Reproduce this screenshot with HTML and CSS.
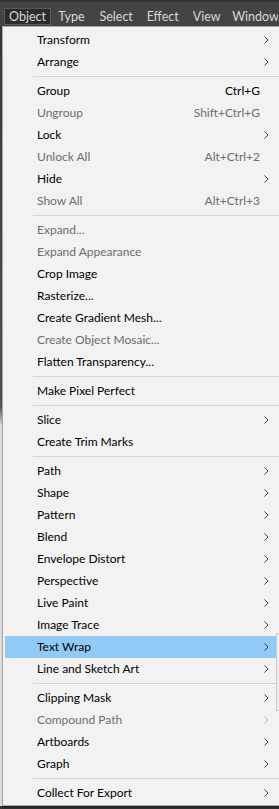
FILE: index.html
```html
<!DOCTYPE html>
<html lang="en">
<head>
  <meta charset="UTF-8" />
  <title>Object menu</title>
  <link rel="stylesheet" href="styles.css">
</head>
<body>
  <div class="menubar">
    <span class="top open">Object</span>
    <span class="top w-type">Type</span>
    <span class="top w-select">Select</span>
    <span class="top w-effect">Effect</span>
    <span class="top w-view">View</span>
    <span class="top">Window</span>
  </div>

  <div class="stage">
    <div class="backdrop"></div>
    <div class="menu">
      <div class="row"><span class="label">Transform</span><span class="arrow"><svg width="5" height="8"><path d="M0.5 0.5 L4 4 L0.5 7.5" /></svg></span></div>
      <div class="row"><span class="label">Arrange</span><span class="arrow"><svg width="5" height="8"><path d="M0.5 0.5 L4 4 L0.5 7.5" /></svg></span></div>
      <div class="sep"></div>
      <div class="row"><span class="label">Group</span><span class="key">Ctrl+G</span><span class="arrow"></span></div>
      <div class="row off"><span class="label">Ungroup</span><span class="key">Shift+Ctrl+G</span><span class="arrow"></span></div>
      <div class="row"><span class="label">Lock</span><span class="arrow"><svg width="5" height="8"><path d="M0.5 0.5 L4 4 L0.5 7.5" /></svg></span></div>
      <div class="row off"><span class="label">Unlock All</span><span class="key">Alt+Ctrl+2</span><span class="arrow"></span></div>
      <div class="row"><span class="label">Hide</span><span class="arrow"><svg width="5" height="8"><path d="M0.5 0.5 L4 4 L0.5 7.5" /></svg></span></div>
      <div class="row off"><span class="label">Show All</span><span class="key">Alt+Ctrl+3</span><span class="arrow"></span></div>
      <div class="sep"></div>
      <div class="row off"><span class="label">Expand...</span></div>
      <div class="row off"><span class="label">Expand Appearance</span></div>
      <div class="row"><span class="label">Crop Image</span></div>
      <div class="row"><span class="label">Rasterize...</span></div>
      <div class="row"><span class="label">Create Gradient Mesh...</span></div>
      <div class="row off"><span class="label">Create Object Mosaic...</span></div>
      <div class="row"><span class="label">Flatten Transparency...</span></div>
      <div class="sep"></div>
      <div class="row"><span class="label">Make Pixel Perfect</span></div>
      <div class="sep"></div>
      <div class="row"><span class="label">Slice</span><span class="arrow"><svg width="5" height="8"><path d="M0.5 0.5 L4 4 L0.5 7.5" /></svg></span></div>
      <div class="row"><span class="label">Create Trim Marks</span></div>
      <div class="sep"></div>
      <div class="row"><span class="label">Path</span><span class="arrow"><svg width="5" height="8"><path d="M0.5 0.5 L4 4 L0.5 7.5" /></svg></span></div>
      <div class="row"><span class="label">Shape</span><span class="arrow"><svg width="5" height="8"><path d="M0.5 0.5 L4 4 L0.5 7.5" /></svg></span></div>
      <div class="row"><span class="label">Pattern</span><span class="arrow"><svg width="5" height="8"><path d="M0.5 0.5 L4 4 L0.5 7.5" /></svg></span></div>
      <div class="row"><span class="label">Blend</span><span class="arrow"><svg width="5" height="8"><path d="M0.5 0.5 L4 4 L0.5 7.5" /></svg></span></div>
      <div class="row"><span class="label">Envelope Distort</span><span class="arrow"><svg width="5" height="8"><path d="M0.5 0.5 L4 4 L0.5 7.5" /></svg></span></div>
      <div class="row"><span class="label">Perspective</span><span class="arrow"><svg width="5" height="8"><path d="M0.5 0.5 L4 4 L0.5 7.5" /></svg></span></div>
      <div class="row"><span class="label">Live Paint</span><span class="arrow"><svg width="5" height="8"><path d="M0.5 0.5 L4 4 L0.5 7.5" /></svg></span></div>
      <div class="row"><span class="label">Image Trace</span><span class="arrow"><svg width="5" height="8"><path d="M0.5 0.5 L4 4 L0.5 7.5" /></svg></span></div>
      <div class="row hot"><span class="label">Text Wrap</span><span class="arrow"><svg width="5" height="8"><path d="M0.5 0.5 L4 4 L0.5 7.5" /></svg></span></div>
      <div class="row"><span class="label">Line and Sketch Art</span><span class="arrow"><svg width="5" height="8"><path d="M0.5 0.5 L4 4 L0.5 7.5" /></svg></span></div>
      <div class="sep"></div>
      <div class="row"><span class="label">Clipping Mask</span><span class="arrow"><svg width="5" height="8"><path d="M0.5 0.5 L4 4 L0.5 7.5" /></svg></span></div>
      <div class="row off"><span class="label">Compound Path</span><span class="arrow"><svg width="5" height="8"><path d="M0.5 0.5 L4 4 L0.5 7.5" /></svg></span></div>
      <div class="row"><span class="label">Artboards</span><span class="arrow"><svg width="5" height="8"><path d="M0.5 0.5 L4 4 L0.5 7.5" /></svg></span></div>
      <div class="row"><span class="label">Graph</span><span class="arrow"><svg width="5" height="8"><path d="M0.5 0.5 L4 4 L0.5 7.5" /></svg></span></div>
      <div class="sep"></div>
      <div class="row"><span class="label">Collect For Export</span><span class="arrow"><svg width="5" height="8"><path d="M0.5 0.5 L4 4 L0.5 7.5" /></svg></span></div>
    </div>
    <!-- edge of the Text Wrap submenu peeking in -->
    <div class="submenu"></div>
  </div>
</body>
</html>
```

FILE: styles.css
```css
html, body { margin: 0; padding: 0; }
body {
  width: 279px; height: 809px; overflow: hidden;
  background: #353535;
  font-family: Lato, "Liberation Sans", sans-serif;
}

.menubar {
  height: 26px; box-sizing: border-box;
  border-top: 2px solid #333;
  background: #444;
  display: flex; align-items: flex-end;
  padding: 0 0 1px 4px;
  white-space: nowrap;
}
.top {
  color: #d8d8d8; font-size: 12.5px; line-height: 15px;
  border: 1px solid transparent;
  overflow: hidden;
}
.top.open {
  width: 48px; box-sizing: border-box;
  background: #2c2c2c; border-color: #5a5a5a;
  padding-left: 4px; margin-right: 6px;
}
.w-type { width: 40px; }
.w-select { width: 46px; }
.w-effect { width: 45px; }
.w-view { width: 38px; }

.stage { position: relative; display: flex; }
.backdrop {
  width: 2px; flex: none;
  background: linear-gradient(#3a3a3a 0, #555 380px, #e9e9e9 400px, #e9e9e9 100%);
}
.menu {
  width: 276px; flex: none;
  background: #f2f2f2;
  border: 1px solid #a9a9a9; border-right: 0;
  padding: 2px 0 1px;
  box-shadow: 0 2px 2px rgba(0,0,0,.35);
  font-size: 12px;
  color: #000;
}
.row {
  height: 22px; box-sizing: border-box;
  margin: 0 0 0 2px; padding: 0 0 1px 32px;
  display: flex; align-items: center;
  white-space: nowrap;
}
.row .label { flex: 1; }
.row .key { color: #000; }
.row .arrow { width: 19px; flex: none; display: flex; padding: 1px 0 0 4px; box-sizing: border-box; }
.arrow svg path { fill: none; stroke: #3c3c3c; stroke-width: 1; }
.row.off, .row.off .key { color: #6d6d6d; }
.row.off .arrow svg path { stroke: #b0b0b0; }
.row.hot { background: #91c9f7; }

.sep { height: 1px; background: #d5d5d5; margin: 3px 0 3px 30px; }

.submenu {
  position: absolute; left: 276px; top: 607px;
  width: 2px; height: 76px;
  background: #f0f0f0; border: 1px solid #c8c8c8; border-right: 0;
}
```
